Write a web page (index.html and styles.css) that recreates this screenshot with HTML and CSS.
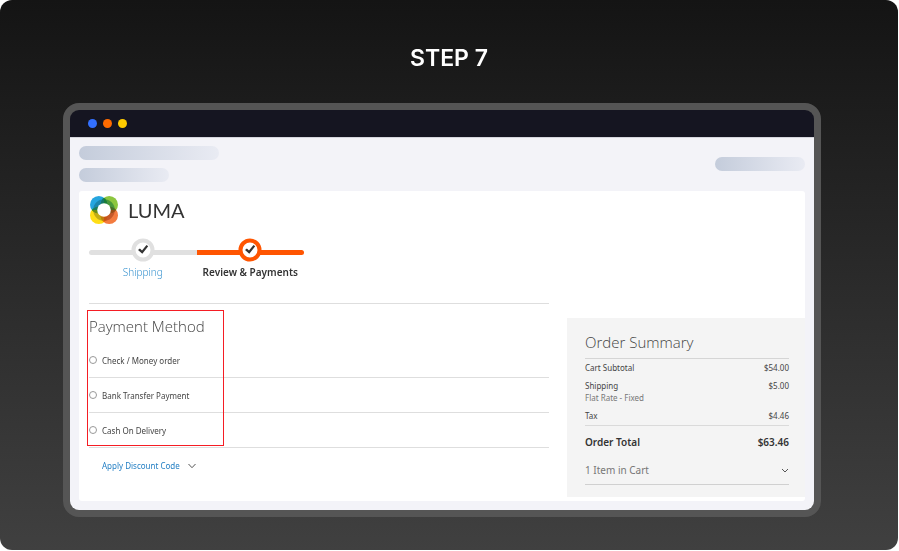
FILE: index.html
```html
<!DOCTYPE html>
<html lang="en">
<head>
<meta charset="utf-8">
<meta name="viewport" content="width=device-width, initial-scale=1">
<title>Step 7</title>
<link rel="stylesheet" href="styles.css">
</head>
<body>
<main class="stage">
  <h1 class="step-title">STEP 7</h1>
  <div class="window">
    <div class="titlebar"><span class="dot blue"></span><span class="dot orange"></span><span class="dot yellow"></span></div>
    <div class="viewport">
      <div class="skeleton">
        <div class="skeleton-group"><span class="bar long"></span><span class="bar"></span></div>
        <span class="bar"></span>
      </div>
      <div class="page">
        <section class="checkout">
          <div class="logo">
            <svg width="30" height="30" viewBox="0 0 30 30" aria-hidden="true">
              <g class="petals">
                <circle cx="9.8" cy="9.8" r="8.8" fill="#26a5df"/>
                <circle cx="20.2" cy="9.8" r="8.8" fill="#8cc63f"/>
                <circle cx="20.2" cy="20.2" r="8.8" fill="#f37b3f"/>
                <circle cx="9.8" cy="20.2" r="8.8" fill="#ffde17"/>
              </g>
              <g class="shade">
                <path d="M6.2 15A8.8 8.8 0 0 1 15 6.2" stroke="#17708a"/>
                <path d="M15 6.2A8.8 8.8 0 0 1 23.8 15" stroke="#1d7a3a"/>
                <path d="M23.8 15A8.8 8.8 0 0 1 15 23.8" stroke="#a8431d"/>
                <path d="M15 23.8A8.8 8.8 0 0 1 6.2 15" stroke="#9a8a16"/>
              </g>
              <circle cx="15" cy="15" r="6.8" fill="#fff"/>
            </svg>
            <span class="wordmark">LUMA</span>
          </div>
          <ol class="progress">
            <li class="done">
              <svg width="24" height="24" viewBox="0 0 24 24" aria-hidden="true"><circle cx="12" cy="12" r="9.5"/><path d="M7 12.1 8.9 10.4 11 12.4 15.5 7 17.2 8.2 11.3 15.7Z"/></svg>
              <a href="#">Shipping</a>
            </li>
            <li class="current">
              <svg width="24" height="24" viewBox="0 0 24 24" aria-hidden="true"><circle cx="12" cy="12" r="9.5"/><path d="M7 12.1 8.9 10.4 11 12.4 15.5 7 17.2 8.2 11.3 15.7Z"/></svg>
              <span>Review &amp; Payments</span>
            </li>
          </ol>
          <form class="payment">
            <h2>Payment Method</h2>
            <label class="method"><input type="radio" name="method">Check / Money order</label>
            <label class="method"><input type="radio" name="method">Bank Transfer Payment</label>
            <label class="method"><input type="radio" name="method">Cash On Delivery</label>
            <div class="highlight"></div>
          </form>
          <button class="discount" type="button">Apply Discount Code
            <svg width="8" height="6" viewBox="0 0 8 6" aria-hidden="true"><path d="M.5 1 4 4.7 7.5 1"/></svg>
          </button>
        </section>
        <aside class="summary">
          <h2>Order Summary</h2>
          <table>
            <tbody>
              <tr><th scope="row">Cart Subtotal</th><td>$54.00</td></tr>
              <tr><th scope="row">Shipping<small>Flat Rate - Fixed</small></th><td>$5.00</td></tr>
              <tr><th scope="row">Tax</th><td>$4.46</td></tr>
            </tbody>
            <tfoot><tr><th scope="row">Order Total</th><td>$63.46</td></tr></tfoot>
          </table>
          <button class="items" type="button">1 Item in Cart
            <svg width="8" height="6" viewBox="0 0 8 6" aria-hidden="true"><path d="M1 1 4 4 7 1"/></svg>
          </button>
        </aside>
      </div>
    </div>
  </div>
</main>
</body>
</html>
```
FILE: styles.css
```css
* { box-sizing: border-box; }
body { margin: 0; background: #fff; font-family: "Noto Sans", sans-serif; color: #444; }
h1, h2, ol { margin: 0; padding: 0; font-weight: 300; }
h2 { font-family: "Open Sans", sans-serif; }
button { padding: 0; border: 0; background: none; font-family: inherit; }

.stage {
  min-height: calc(100vh - 1px);
  margin-right: 1px;
  padding: 43px 77px 33px 63px;
  border-radius: 12px;
  background: linear-gradient(#141414, #404040);
}
.step-title {
  margin-bottom: 30px;
  padding-left: 14px;
  font: 600 23px/30px Inter, sans-serif;
  color: #fff;
  text-align: center;
}
.window { border: 7px solid #555; border-radius: 16px; background: #555; }
.titlebar {
  display: flex;
  align-items: center;
  gap: 6px;
  height: 27px;
  padding-left: 18px;
  border-radius: 9px 9px 0 0;
  background: #151521;
}
.dot { width: 9px; height: 9px; border-radius: 50%; }
.blue { background: #3370ff; }
.orange { background: #ff6b00; }
.yellow { background: #ffcc00; }

.viewport {
  padding: 8px 9px 9px;
  border-top: 1px solid #d5d5dd;
  border-radius: 0 0 9px 9px;
  background: #f3f3f8;
}
.skeleton { display: flex; align-items: center; justify-content: space-between; margin-bottom: 9px; }
.skeleton-group { display: grid; gap: 8px; }
.bar { width: 90px; height: 14px; border-radius: 7px; background: linear-gradient(90deg, #c4ccdb, #e9ebf3); }
.bar.long { width: 140px; }

.page {
  display: grid;
  grid-template-columns: 1fr 238px;
  gap: 18px;
  align-items: end;
  padding-bottom: 4px;
  padding-left: 10px;
  border-radius: 3px;
  background: #fff;
}
.checkout { padding: 4px 0 23px; }
.logo { display: flex; align-items: center; gap: 9px; }
.petals circle { mix-blend-mode: multiply; }
.shade path { fill: none; stroke-width: 4; opacity: .6; }
.wordmark { font: 400 20px/30px Lato, sans-serif; color: #333; }

.progress { display: flex; width: 215px; margin-top: 13px; list-style: none; }
.progress li {
  flex: 1;
  display: grid;
  justify-items: center;
  position: relative;
  font-size: 10px;
  line-height: 20px;
  white-space: nowrap;
}
.progress li::before {
  content: "";
  position: absolute;
  inset: 12px 0 auto;
  height: 5px;
  border-radius: 3px 0 0 3px;
  background: #e0e0e0;
}
.progress .current::before { border-radius: 0 3px 3px 0; background: #ff5501; }
.progress svg { position: relative; }
.progress .current { font-weight: 600; color: #333; }
.progress circle { fill: #fff; stroke: #e0e0e0; stroke-width: 4; }
.progress .current circle { stroke: #ff5501; }
.progress path { fill: #333; }
.progress a { color: #3a94d0; text-decoration: none; }

.payment { position: relative; margin-top: 21px; padding-top: 9px; border-top: 1px solid #dedede; }
.payment h2 { margin-bottom: 4px; font-size: 15px; line-height: 26px; }
.highlight { position: absolute; top: 6px; left: -2px; width: 137px; height: 136px; border: 1px solid #f51d24; }
.method {
  display: flex;
  align-items: center;
  gap: 5px;
  height: 35px;
  border-bottom: 1px solid #dedede;
  font-size: 8px;
}
.method input { appearance: none; width: 8px; height: 8px; margin: 0; border: 1px solid #999; border-radius: 50%; background: #fff; }
.discount {
  display: flex;
  align-items: center;
  gap: 8px;
  margin: 10px 0 0 13px;
  font-size: 8px;
  line-height: 16px;
  color: #237fc4;
}
.discount path, .items path { fill: none; stroke: #555; stroke-width: 1; }

.summary { padding: 10px 16px 12px 18px; background: #f4f4f4; }
.summary h2 { padding-bottom: 2px; border-bottom: 1px solid #d5d5d5; font-size: 15px; line-height: 28px; }
table { width: 100%; border-collapse: collapse; font-size: 8px; line-height: 12px; }
th, td { padding: 3px 0; text-align: left; vertical-align: top; font-weight: 400; }
td { text-align: right; }
small { display: block; font-size: 8px; color: #777; }
tfoot th, tfoot td { padding: 8px 0 7px; border-top: 1px solid #dadada; font-size: 10px; line-height: 16px; font-weight: 600; color: #333; }
.items {
  display: flex;
  align-items: center;
  justify-content: space-between;
  width: 100%;
  border-bottom: 1px solid #d0d0d0;
  font-size: 10px;
  line-height: 27px;
  color: #777;
}
```
